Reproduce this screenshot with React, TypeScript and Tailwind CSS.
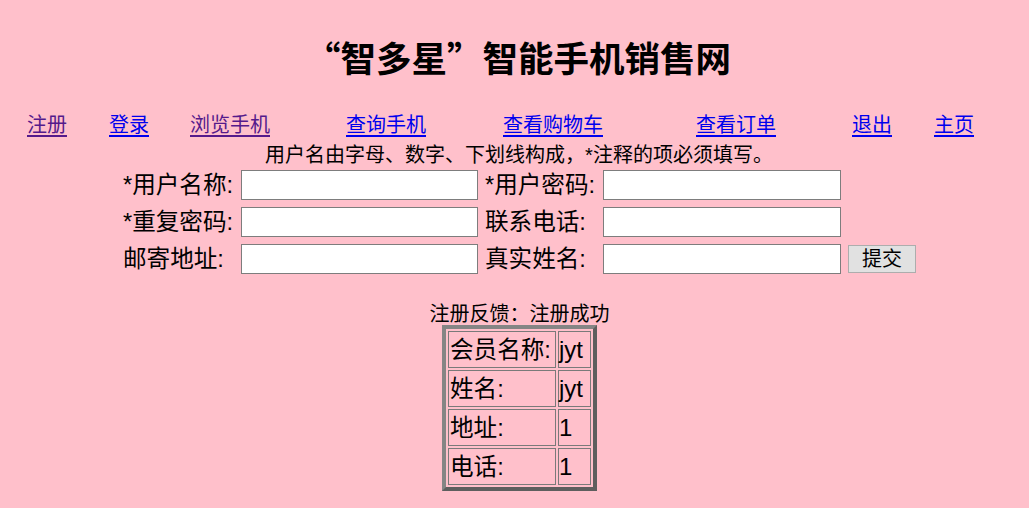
import React from "react"

const CJK = "font-['Liberation_Sans','Noto_Sans_CJK_SC',sans-serif]"

type NavItem = { label: string; visited?: boolean; ml: string }

const navItems: NavItem[] = [
  { label: "注册", visited: true, ml: "ml-[27px]" },
  { label: "登录", ml: "ml-[42px]" },
  { label: "浏览手机", visited: true, ml: "ml-[41px]" },
  { label: "查询手机", ml: "ml-[76px]" },
  { label: "查看购物车", ml: "ml-[77px]" },
  { label: "查看订单", ml: "ml-[93px]" },
  { label: "退出", ml: "ml-[76px]" },
  { label: "主页", ml: "ml-[42px]" },
]

const fields: [string, string][] = [
  ["*用户名称:", "*用户密码:"],
  ["*重复密码:", "联系电话:"],
  ["邮寄地址:", "真实姓名:"],
]

const result: [string, string][] = [
  ["会员名称:", "jyt"],
  ["姓名:", "jyt"],
  ["地址:", "1"],
  ["电话:", "1"],
]

function Field({ label, wide }: { label: string; wide?: boolean }) {
  return (
    <>
      <span className="w-[118px] text-[23.6px] leading-[30px] text-black">{label}</span>
      <input
        type="text"
        className={
          (wide ? "w-[238px]" : "w-[237px]") +
          " h-[30px] bg-white border border-[#7d7d7d] outline-none"
        }
      />
    </>
  )
}

export default function App() {
  return (
    <div className={`${CJK} min-h-[508px] w-full bg-[#ffc0cb] flex flex-col`}>
      {/* Title */}
      <h1 className="mt-[37px] pl-[7px] text-center text-[35.5px] leading-[40px] font-bold text-black font-['Noto_Sans_CJK_SC',sans-serif]">
        “智多星”智能手机销售网
      </h1>

      {/* Navigation */}
      <nav className="mt-[36px] flex items-center h-[24px]">
        {navItems.map((item) => (
          <a
            key={item.label}
            href="#"
            className={
              item.ml +
              " text-[20px] leading-[24px] underline underline-offset-[3px] " +
              (item.visited ? "text-[#551a8b]" : "text-[#0000ee]")
            }
          >
            {item.label}
          </a>
        ))}
      </nav>

      <p className="mt-[8px] pl-[9px] text-center text-[20px] leading-[20px] text-black">
        用户名由字母、数字、下划线构成，*注释的项必须填写。
      </p>

      {/* Registration form */}
      <form className="mt-[5px] ml-[123px] flex flex-col gap-[7px]">
        {fields.map(([a, b], i) => (
          <div key={a} className="flex items-center">
            <Field label={a} />
            <span className="w-[7px]" />
            <Field label={b} wide />
            {i === 2 && (
              <button
                type="button"
                className="ml-[7px] w-[68px] h-[28px] bg-[#e1e1e1] border border-[#adadad] text-[20px] leading-[26px] text-black"
              >
                提交
              </button>
            )}
          </div>
        ))}
      </form>

      <p className="mt-[30px] text-center text-[20px] leading-[20px] text-black pl-[10px]">
        注册反馈：注册成功
      </p>

      {/* Result table */}
      <div className="mt-[1px] flex justify-center pl-[10px]">
        <table className="border-separate border-spacing-[2px] border-4 border-solid border-t-[#858585] border-l-[#858585] border-r-[#5e5e5e] border-b-[#5e5e5e]">
          <tbody>
            {result.map(([k, v]) => (
              <tr key={k}>
                <td className="w-[108px] h-[37px] border border-[#7a7a7a] px-[1px] text-[23.6px] leading-[28px] text-black">
                  {k}
                </td>
                <td className="w-[33px] h-[37px] border border-[#7a7a7a] px-0 text-[24px] leading-[28px] text-black">
                  {v}
                </td>
              </tr>
            ))}
          </tbody>
        </table>
      </div>
    </div>
  )
}
